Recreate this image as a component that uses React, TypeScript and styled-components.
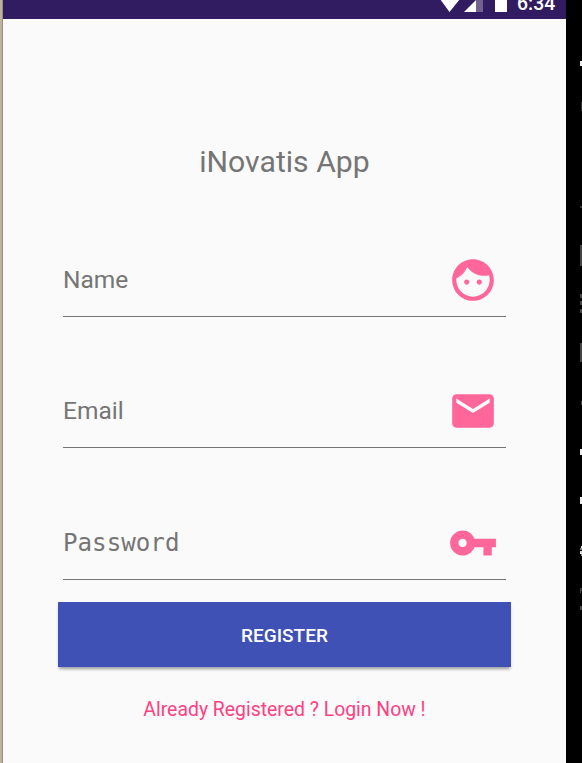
import React from "react";
import styled, { createGlobalStyle } from "styled-components";

const GlobalStyle = createGlobalStyle`
  *, *::before, *::after { box-sizing: border-box; }
  body { margin: 0; background: #000; overflow: hidden; }
`;

const Desktop = styled.div`
  display: flex;
  width: 582px;
  height: 763px;
  overflow: hidden;
  background: #000;
  font-family: Roboto, "Noto Sans", sans-serif;
`;

const Edge = styled.div`
  flex: none;
  width: 3px;
  background: #bdb29b;
  border-right: 1px solid #978d79;
`;

const Screen = styled.main`
  flex: none;
  width: 563px;
  display: flex;
  flex-direction: column;
  background: #fafafa;
`;

const StatusBar = styled.header`
  height: 19px;
  flex: none;
  display: flex;
  justify-content: flex-end;
  background: #311b61;
  overflow: hidden;
  padding-right: 11px;
`;

const StatusIcons = styled.svg`
  display: block;
  flex: none;
  width: 77px;
  height: 19px;
`;

const Clock = styled.span`
  margin-top: -8px;
  width: 38px;
  color: #fff;
  font-size: 19.4px;
  font-weight: 500;
  line-height: 23px;
  white-space: nowrap;
`;

const Title = styled.h1`
  margin: 123px 0 0;
  height: 40px;
  line-height: 40px;
  text-align: center;
  color: #757575;
  font-size: 30.2px;
  font-weight: 400;
`;

const Form = styled.form`
  display: flex;
  flex-direction: column;
  padding: 64px 55px 0;
`;

const Field = styled.label`
  display: flex;
  align-items: center;
  justify-content: space-between;
  height: 71px;
  margin: 0 5px 60.3px;
  padding: 0 8px 2px 0;
  border-bottom: 1.5px solid #767676;
`;

const Hint = styled.span<{ $mono?: boolean }>`
  color: #757575;
  font-family: ${(p) => (p.$mono ? '"DejaVu Sans Mono", monospace' : "inherit")};
  font-size: ${(p) => (p.$mono ? "24.2px" : "24.5px")};
  line-height: 30px;
`;

const FieldIcon = styled.svg`
  width: 50px;
  height: 50px;
  fill: #ff6699;
`;

const RegisterButton = styled.button`
  height: 65px;
  margin-top: -37.9px;
  padding: 1px 0 0;
  border: 0;
  background: #3f51b5;
  color: #fff;
  font: 500 19px/66px Roboto, sans-serif;
  box-shadow: 0 3px 3px -1px rgba(0, 0, 0, 0.38);
`;

const LoginLink = styled.a`
  margin-top: 30px;
  text-align: center;
  color: #ff4081;
  font-size: 19.4px;
  line-height: 26px;
`;

const Gutter = styled.svg`
  flex: none;
  width: 16px;
  height: 763px;
`;

const fields = [
  {
    label: "Name",
    path: "M9 11.75c-.69 0-1.25.56-1.25 1.25s.56 1.25 1.25 1.25 1.25-.56 1.25-1.25-.56-1.25-1.25-1.25zm6 0c-.69 0-1.25.56-1.25 1.25s.56 1.25 1.25 1.25 1.25-.56 1.25-1.25-.56-1.25-1.25-1.25zM12 2C6.48 2 2 6.48 2 12s4.48 10 10 10 10-4.48 10-10S17.52 2 12 2zm0 18c-4.41 0-8-3.59-8-8 0-.29.02-.58.05-.86 2.36-1.05 4.23-2.98 5.21-5.37C11.07 8.33 14.05 10 17.42 10c.78 0 1.53-.09 2.25-.26.21.71.33 1.47.33 2.26 0 4.41-3.59 8-8 8z",
  },
  {
    label: "Email",
    path: "M20 4H4c-1.1 0-1.99.9-1.99 2L2 18c0 1.1.9 2 2 2h16c1.1 0 2-.9 2-2V6c0-1.1-.9-2-2-2zm0 4l-8 5-8-5V6l8 5 8-5v2z",
  },
  {
    label: "Password",
    mono: true,
    path: "M12.65 10C11.83 7.67 9.61 6 7 6c-3.31 0-6 2.69-6 6s2.69 6 6 6c2.61 0 4.83-1.67 5.65-4H17v4h4v-4h2v-4H12.65zM7 14c-1.1 0-2-.9-2-2s.9-2 2-2 2 .9 2 2-.9 2-2 2z",
  },
];

// x, y, width, height, colour of the slivers at the window's right edge
const marks: [number, number, number, number, string][] = [
  [14, 61, 2, 5, "#eee"],
  [15, 102, 1, 9, "#333"],
  [14, 206, 2, 2, "#333"],
  [14, 245, 2, 21, "#444"],
  [14, 294, 2, 4, "#444"],
  [14, 301, 2, 4, "#444"],
  [14, 309, 2, 4, "#444"],
  [14, 343, 2, 19, "#444"],
  [15, 401, 1, 4, "#444"],
  [14, 449, 2, 6, "#eee"],
  [14, 497, 2, 7, "#eee"],
  [15, 546, 1, 2, "#ddd"],
  [14, 548, 2, 2, "#888"],
  [14, 551, 2, 3, "#ddd"],
  [15, 554, 1, 2, "#888"],
  [14, 588, 1, 5, "#444"],
  [15, 588, 1, 3, "#333"],
  [14, 606, 2, 4, "#444"],
];

export default function App() {
  return (
    <>
      <GlobalStyle />
      <Desktop>
        <Edge />
        <Screen>
          <StatusBar>
            <StatusIcons viewBox="0 0 77 19" aria-hidden="true">
              <path d="M0 -1H20L9.5 12Z" fill="#fff" />
              <path d="M36 -7V12H43V-7Z" fill="#71618f" />
              <path d="M24 12L36 0V12Z" fill="#fff" />
              <path d="M55 -7H67V12H55Z" fill="#fff" />
            </StatusIcons>
            <Clock>6:34</Clock>
          </StatusBar>
          <Title>iNovatis App</Title>
          <Form onSubmit={(e) => e.preventDefault()}>
            {fields.map((f) => (
              <Field key={f.label}>
                <Hint $mono={f.mono}>{f.label}</Hint>
                <FieldIcon viewBox="0 0 24 24" aria-hidden="true">
                  <path d={f.path} />
                </FieldIcon>
              </Field>
            ))}
            <RegisterButton type="submit">REGISTER</RegisterButton>
            <LoginLink>Already Registered ? Login Now !</LoginLink>
          </Form>
        </Screen>
        <Gutter viewBox="0 0 16 763" aria-hidden="true" shapeRendering="crispEdges">
          {marks.map(([x, y, w, h, c]) => (
            <rect key={`${x}-${y}`} x={x} y={y} width={w} height={h} fill={c} />
          ))}
        </Gutter>
      </Desktop>
    </>
  );
}
